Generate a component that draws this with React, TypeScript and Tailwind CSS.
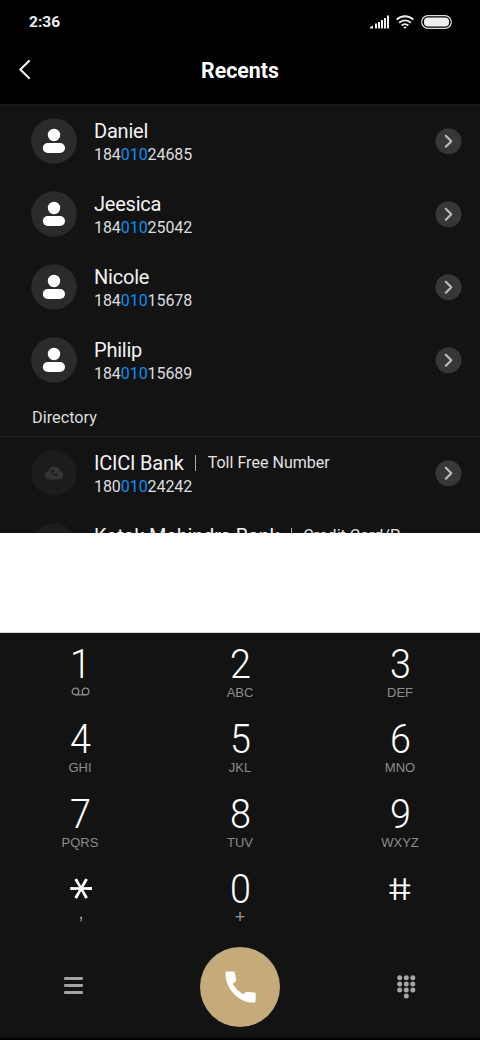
import React from "react";

const contacts = [
  { name: "Daniel", number: ["184", "010", "24685"] },
  { name: "Jeesica", number: ["184", "010", "25042"] },
  { name: "Nicole", number: ["184", "010", "15678"] },
  { name: "Philip", number: ["184", "010", "15689"] },
];

const directory = [
  { name: "ICICI Bank", detail: "Toll Free Number", number: ["180", "010", "24242"] },
  { name: "Kotak Mahindra Bank", detail: "Credit Card/P" },
];

const keys = [
  { digit: "1", label: "voicemail" },
  { digit: "2", label: "ABC" },
  { digit: "3", label: "DEF" },
  { digit: "4", label: "GHI" },
  { digit: "5", label: "JKL" },
  { digit: "6", label: "MNO" },
  { digit: "7", label: "PQRS" },
  { digit: "8", label: "TUV" },
  { digit: "9", label: "WXYZ" },
  { digit: "*", label: "," },
  { digit: "0", label: "+" },
  { digit: "#", label: "" },
];

const StatusBar = () => (
  <div className="flex h-11 items-center justify-between pr-7 pl-[29px]">
    <span className="pt-px text-[15.5px] font-bold text-[#f0f0f0]">2:36</span>
    <div className="flex items-center gap-[7px]">
      <svg width="19" height="14" viewBox="0 0 19 14" fill="#eee">
        <path d="M0 13.5v-1.2L3 10.5v3z" />
        <rect x="5" y="8.5" width="2" height="5" />
        <rect x="8" y="7" width="2" height="6.5" />
        <rect x="11" y="5" width="2" height="8.5" />
        <rect x="14" y="3" width="2" height="10.5" />
        <rect x="17" y="0.5" width="2" height="13" />
      </svg>
      <svg width="18" height="14" viewBox="0 0 18 14" fill="none" stroke="#eee" strokeWidth="1.9">
        <path d="M0.7 4.6a12 12 0 0 1 16.6 0" />
        <path d="M3.2 7.7a8.4 8.4 0 0 1 11.6 0" />
        <path d="M5.7 10.5a4.8 4.8 0 0 1 6.6 0" />
        <path d="M7.1 11.7h3.8L9 13.9z" fill="#eee" stroke="none" />
      </svg>
      <svg width="31" height="14" viewBox="0 0 31 14">
        <rect x="0.7" y="0.7" width="29.6" height="12.6" rx="6.3" fill="none" stroke="#ddd" strokeWidth="1.2" />
        <rect x="3" y="2.6" width="25" height="8.8" rx="4" fill="#eee" />
      </svg>
    </div>
  </div>
);

const PersonAvatar = () => (
  <svg width="46" height="46" viewBox="0 0 46 46">
    <circle cx="23" cy="23" r="22.8" fill="#2b2b2b" />
    <circle cx="23" cy="17" r="6.2" fill="#fff" />
    <rect x="11.8" y="25" width="22.2" height="10" rx="5" fill="#fff" />
  </svg>
);

const CloudAvatar = () => (
  <svg width="46" height="46" viewBox="0 0 46 46">
    <circle cx="23" cy="23" r="22.8" fill="#1c1c1c" />
    <path
      d="M18 29.4a4.2 4.2 0 0 1-.8-8.3A6.2 6.2 0 0 1 29 20.6a4.5 4.5 0 0 1-1 8.8z"
      fill="#343434"
    />
    <path
      d="M20.3 19.8c0 4 2.6 6.4 6.4 6.4l.1-2-2-.5-.8.8c-1-.5-1.5-1.1-1.9-2.1l.8-.8-.5-1.9z"
      fill="#1c1c1c"
    />
  </svg>
);

const MoreButton = () => (
  <svg className="ml-auto" width="27" height="27" viewBox="0 0 27 27">
    <circle cx="13.5" cy="13.2" r="13" fill="#373737" />
    <path
      d="M10.8 7.7l5.5 5.5-5.5 5.5"
      fill="none"
      stroke="#bdbdbd"
      strokeWidth="2.1"
      strokeLinecap="round"
      strokeLinejoin="round"
    />
  </svg>
);

const Row = ({ name, detail, number }: { name: string; detail?: string; number?: string[] }) => (
  <li className="flex h-[73px] shrink-0 items-center pr-[18px] pb-px pl-[31px]">
    {detail ? <CloudAvatar /> : <PersonAvatar />}
    <div className="ml-[17px] h-[47px] pt-px whitespace-nowrap">
      <div className="flex h-6 items-center text-[20px] leading-6 tracking-[-0.22px] text-[#f2f2f2]">
        {name}
        {detail && (
          <>
            <span className="mx-[11.5px] h-4 w-px bg-[#aaa]"></span>
            <span className="pt-px text-[16px] tracking-[0.03px] text-[#e2e2e2]">{detail}</span>
          </>
        )}
      </div>
      {number && (
        <div className="mt-px text-[16px] leading-[22px] tracking-[-0.07px] text-[#dedede]">
          {number[0]}
          <span className="text-[#0b8ff0]">{number[1]}</span>
          {number[2]}
        </div>
      )}
    </div>
    <MoreButton />
  </li>
);

const KeyDigit = ({ digit }: { digit: string }) => {
  if (digit === "*") {
    return (
      <span className="inline-block translate-x-[-9px] translate-y-[-1px] rotate-90 font-[Inter] text-[53px] leading-none font-light">
        *
      </span>
    );
  }
  if (digit === "#") {
    return (
      <span className="inline-block translate-y-[-1px] scale-x-[1.22] scale-y-[0.96] skew-x-[9deg] font-[Inter] text-[31px] leading-none font-light">
        #
      </span>
    );
  }
  return <span className="inline-block scale-x-[0.92]">{digit}</span>;
};

const Key = ({ digit, label }: { digit: string; label: string }) => (
  <button className="flex h-[75px] flex-col items-center">
    <span className="flex h-[51px] items-center pt-3 text-[41px] leading-none font-light text-white">
      <KeyDigit digit={digit} />
    </span>
    {label === "voicemail" ? (
      <svg className="mt-[3px] ml-[2px]" width="20" height="10" viewBox="0 0 20 10" fill="none" stroke="#8c8c8c" strokeWidth="1.3">
        <circle cx="4.5" cy="4.5" r="3.3" />
        <circle cx="14.5" cy="4.5" r="3.3" />
        <path d="M4.5 7.8h10" />
      </svg>
    ) : label === "," ? (
      <span className="mt-[-5px] h-4 pl-[2px] font-['Liberation_Sans'] text-[20px] leading-4 text-[#9a9a9a]">
        {label}
      </span>
    ) : label === "+" ? (
      <span className="h-4 font-['Liberation_Sans'] text-[18px] leading-4 text-[#9a9a9a]">
        {label}
      </span>
    ) : (
      <span className="mt-px h-4 font-['Liberation_Sans'] text-[13px] leading-4 text-[#8c8c8c]">
        {label}
      </span>
    )}
  </button>
);

const BottomBar = () => (
  <div className="grid h-[105px] grid-cols-3 items-center">
    <svg className="ml-16" width="19" height="17" viewBox="0 0 19 17" fill="#a3a3a3">
      <rect y="0" width="19" height="3" rx="1.2" />
      <rect y="7" width="19" height="3" rx="1.2" />
      <rect y="14" width="19" height="3" rx="1.2" />
    </svg>
    <button className="mx-auto mt-[2px] flex size-20 items-center justify-center rounded-full bg-[#c6ab7a]">
      <svg width="31" height="32" viewBox="0 0 31 32" fill="#fff">
        <path d="M1.7 0.6H8.3Q9.5 0.6 9.7 1.8L11.3 9Q11.4 9.5 11 9.9L7.6 13Q11.5 19.2 18.2 23.6L20.6 21.3Q21.2 20.7 22 20.8L29.6 21.6Q30.9 21.8 30.8 23.1L30.5 30.2Q30.4 31.5 29.2 31.6C14 32.2 0.2 18 0.5 2Q0.5 0.6 1.7 0.6z" />
      </svg>
    </button>
    <svg className="mt-[3px] ml-[77px]" width="19" height="24" viewBox="0 0 19 24" fill="#a6a6a6">
      {[2.7, 8.9, 15].map((cy) =>
        [2.7, 9.3, 15.8].map((cx) => <circle key={`${cx}-${cy}`} cx={cx} cy={cy} r="2.5" />)
      )}
      <circle cx="9.3" cy="21.1" r="2.5" />
    </svg>
  </div>
);

const App = () => {
  return (
    <main className="flex h-[1040px] w-[480px] flex-col overflow-hidden bg-black font-[Roboto,sans-serif]">
      <StatusBar />
      <header className="grid h-[60px] grid-cols-3 items-center pb-2">
        <svg className="ml-[18px]" width="13" height="20" viewBox="0 0 13 20" fill="none" stroke="#eee" strokeWidth="2.2" strokeLinecap="round" strokeLinejoin="round">
          <path d="M11 1L2.3 9.5 11 18" />
        </svg>
        <h1 className="pt-px text-center text-[21.3px] font-bold text-white">Recents</h1>
      </header>
      <section className="flex h-[429px] flex-col overflow-hidden border-t border-[#191919] bg-[#131313]">
        <ul>
          {contacts.map((contact) => (
            <Row key={contact.name} {...contact} />
          ))}
        </ul>
        <h2 className="h-10 shrink-0 border-b border-[#212121] pt-[9px] pl-8 text-[16.3px] leading-6 text-[#dcdcdc]">
          Directory
        </h2>
        <ul>
          {directory.map((entry) => (
            <Row key={entry.name} {...entry} />
          ))}
        </ul>
      </section>
      <div className="h-[100px] border-b border-[#d8d8d8] bg-white"></div>
      <section className="h-[405px] bg-[#131313]">
        <div className="grid grid-cols-3">
          {keys.map((key) => (
            <Key key={key.digit} {...key} />
          ))}
        </div>
        <BottomBar />
      </section>
    </main>
  );
};

export default App;
